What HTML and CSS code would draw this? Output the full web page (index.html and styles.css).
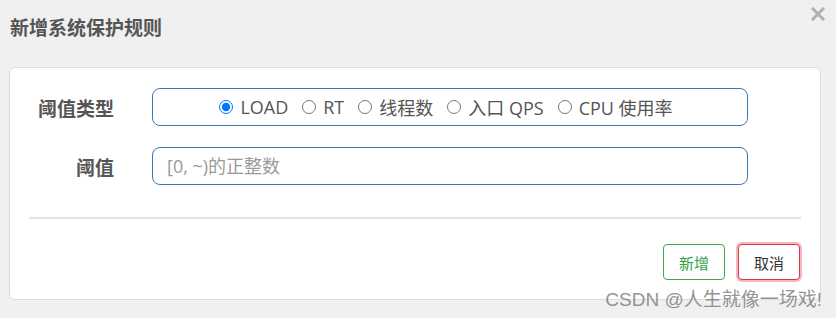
FILE: index.html
```html
<!DOCTYPE html>
<html lang="zh-CN">

<head>
    <meta charset="UTF-8">
    <title>新增系统保护规则</title>
    <link rel="stylesheet" href="styles.css">
</head>

<body>
    <div class="modal">
        <div class="modal-header">
            <h3>新增系统保护规则</h3>
            <button class="close-btn" title="关闭">
                <svg width="14" height="14" viewBox="0 0 14 14">
                    <path d="M2 2 L12 12 M12 2 L2 12" stroke="#b0b0b0" stroke-width="3" stroke-linecap="square" />
                </svg>
            </button>
        </div>
        <div class="card">
            <div class="form-row">
                <label class="form-label">阈值类型</label>
                <div class="field radio-box">
                    <label class="opt"><input type="radio" name="grade" checked>LOAD</label>
                    <label class="opt"><input type="radio" name="grade">RT</label>
                    <label class="opt"><input type="radio" name="grade">线程数</label>
                    <label class="opt"><input type="radio" name="grade">入口 QPS</label>
                    <label class="opt"><input type="radio" name="grade">CPU 使用率</label>
                </div>
            </div>
            <div class="form-row">
                <label class="form-label">阈值</label>
                <input class="field text-input" type="text" placeholder="[0, ~)的正整数">
            </div>
            <hr class="divider">
            <div class="actions">
                <button class="btn btn-add">新增</button>
                <button class="btn btn-cancel">取消</button>
            </div>
        </div>
        <div class="watermark">CSDN @人生就像一场戏!</div>
    </div>
</body>

</html>
```

FILE: styles.css
```css
body {
    margin: 0;
    padding: 0;
    background: #f0f0f0;
    font-family: "Open Sans", "Noto Sans CJK SC", sans-serif;
    color: #555;
}

.modal {
    position: relative;
    width: 836px;
    height: 318px;
}

.modal-header {
    display: flex;
    justify-content: space-between;
    align-items: flex-start;
    padding: 13px 11px 0 10px;
    height: 67px;
    box-sizing: border-box;
}

.modal-header h3 {
    margin: 0;
    font-family: "Noto Sans CJK SC", sans-serif;
    font-size: 19px;
    line-height: 28px;
    font-weight: bold;
    color: #555;
}

.close-btn {
    border: none;
    background: none;
    padding: 0;
    margin-top: -6px;
    cursor: pointer;
}

.card {
    margin: 0 15px 0 9px;
    background: #fff;
    border: 1px solid #ddd;
    border-radius: 6px;
    padding: 20px 19px 19px 0;
    height: 233px;
    box-sizing: border-box;
}

.form-row {
    display: flex;
    align-items: center;
    margin-bottom: 21px;
}

.form-label {
    width: 104px;
    margin-right: 38px;
    text-align: right;
    font-family: "Noto Sans CJK SC", sans-serif;
    font-size: 19px;
    font-weight: bold;
    color: #555;
}

.field {
    width: 596px;
    height: 38px;
    box-sizing: border-box;
    border: 1px solid #3b78b5;
    border-radius: 8px;
    font-family: inherit;
}

.radio-box {
    display: flex;
    justify-content: center;
    align-items: center;
    padding-right: 8px;
}

.opt {
    display: inline-flex;
    align-items: center;
    margin: 0 7px;
    font-size: 18px;
    color: #555;
}

.opt input {
    margin: 0 7px 0 0;
    width: 14px;
    height: 14px;
}

.text-input {
    padding: 0 14px;
    font-size: 18px;
    color: #555;
    outline: none;
}

.text-input::placeholder {
    color: #9a9a9a;
}

.divider {
    border: none;
    border-top: 2px solid #e3e3e3;
    margin: 32px 0 25px 19px;
}

.actions {
    display: flex;
    justify-content: flex-end;
    gap: 13px;
    padding-right: 1px;
}

.btn {
    width: 62px;
    height: 36px;
    background: #fff;
    border-radius: 4px;
    font-family: "Noto Sans CJK SC", sans-serif;
    font-size: 15px;
    cursor: pointer;
}

.btn-add {
    border: 1px solid #3aaa4e;
    color: #2f9e44;
}

.btn-cancel {
    border: 1px solid #dc3545;
    color: #333;
    box-shadow: 0 0 0 2px rgba(220, 53, 69, 0.35);
}

.watermark {
    position: absolute;
    right: 14px;
    bottom: 7px;
    font-size: 19px;
    color: rgba(120, 120, 120, 0.8);
    font-family: "Liberation Sans", "Noto Sans CJK SC", sans-serif;
}
```
